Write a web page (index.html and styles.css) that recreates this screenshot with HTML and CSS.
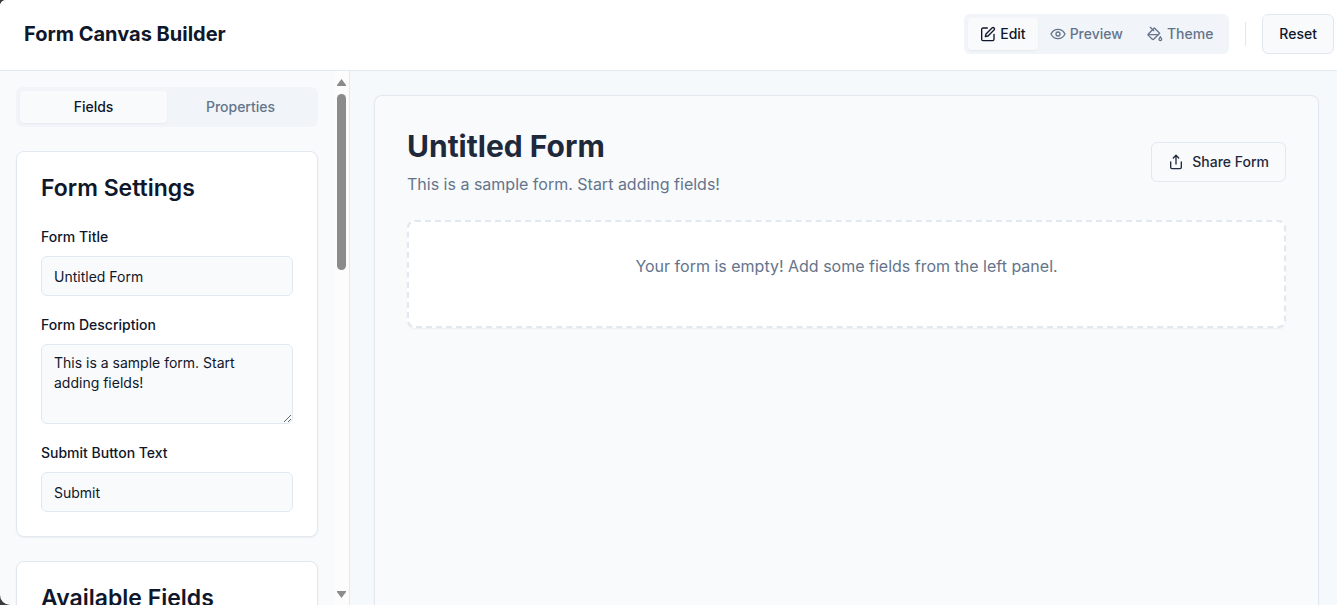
FILE: index.html
```html
<!DOCTYPE html>
<html lang="en">
<head>
<meta charset="utf-8">
<title>Form Canvas Builder</title>
<link rel="stylesheet" href="styles.css">
</head>
<body>
<div class="app">
  <header class="topbar">
    <h1 class="brand">Form Canvas Builder</h1>
    <div class="actions">
      <div class="segmented">
        <button class="segment active" type="button">
          <svg class="icon" viewBox="0 0 24 24"><path d="M11 3H4.500A2 2 0 0 0 2.500 5v15a2 2 0 0 0 2 2H19a2 2 0 0 0 2-2v-7.500"/><path d="M18.400 2.600a2.170 2.170 0 0 1 3 3L12 15l-4 1 1-4Z"/></svg>
          Edit
        </button>
        <button class="segment" type="button">
          <svg class="icon" viewBox="0 0 24 24"><path d="M1.500 12s3.500-7 10.500-7 10.500 7 10.500 7-3.500 7-10.500 7S1.500 12 1.500 12Z"/><circle cx="12" cy="12" r="3"/></svg>
          Preview
        </button>
        <button class="segment" type="button">
          <svg class="icon" viewBox="0 0 24 24"><path d="m19 11-8-8-8.600 8.600a2 2 0 0 0 0 2.800l5.200 5.200c.8.800 2 .8 2.800 0L19 11Z"/><path d="m5 2 5 5"/><path d="M2 13h15"/><path d="M22 20a2 2 0 1 1-4 0c0-1.600 1.700-2.400 2-4 .3 1.600 2 2.400 2 4Z"/></svg>
          Theme
        </button>
      </div>
      <div class="divider"></div>
      <button class="btn" type="button">Reset</button>
    </div>
  </header>
  <div class="workspace">
    <aside class="sidebar">
      <div class="sidebar-content">
        <div class="tabs">
          <button class="tab active" type="button">Fields</button>
          <button class="tab" type="button">Properties</button>
        </div>
        <section class="card">
          <h2 class="card-title">Form Settings</h2>
          <div class="fields">
            <div class="field">
              <label class="label" for="form-title">Form Title</label>
              <input class="control" id="form-title" type="text" value="Untitled Form">
            </div>
            <div class="field">
              <label class="label" for="form-description">Form Description</label>
              <textarea class="control area" id="form-description">This is a sample form. Start adding fields!</textarea>
            </div>
            <div class="field">
              <label class="label" for="submit-text">Submit Button Text</label>
              <input class="control" id="submit-text" type="text" value="Submit">
            </div>
          </div>
        </section>
        <section class="card">
          <h2 class="card-title">Available Fields</h2>
        </section>
      </div>
      <div class="scrollbar" aria-hidden="true">
        <svg class="arrow" viewBox="0 0 9 7"><path d="M4.500 0 9 6v1H0V6Z"/></svg>
        <div class="track"><div class="thumb"></div></div>
        <svg class="arrow" viewBox="0 0 9 7"><path d="M0 0h9v1L4.500 7 0 1Z"/></svg>
      </div>
    </aside>
    <main class="canvas">
      <div class="panel">
        <div class="panel-head">
          <div>
            <h2 class="form-title">Untitled Form</h2>
            <p class="form-description">This is a sample form. Start adding fields!</p>
          </div>
          <button class="btn share" type="button">
            <svg class="icon" viewBox="0 0 24 24"><path d="M4 12v8a2 2 0 0 0 2 2h12a2 2 0 0 0 2-2v-8"/><path d="m16 6-4-4-4 4"/><path d="M12 2v13"/></svg>
            Share Form
          </button>
        </div>
        <div class="empty">
          <p class="empty-text">Your form is empty! Add some fields from the left panel.</p>
        </div>
      </div>
    </main>
  </div>
</div>
</body>
</html>
```
FILE: styles.css
```css
* { box-sizing: border-box; }
html { background: #3a3a3a; }
body {
  margin: 0;
  font-family: Inter, "Liberation Sans", sans-serif;
  font-size: 16px;
  line-height: 24px;
  color: #0f172a;
}
h1, h2, p { margin: 0; }
button, input, textarea { font: inherit; color: inherit; }
.app {
  display: flex;
  flex-direction: column;
  height: 100vh;
  overflow: hidden;
  background: #f9fafc;
  border-radius: 6px 0 0 10px;
}
.topbar {
  display: flex;
  align-items: center;
  justify-content: space-between;
  padding: 14px 3px 16px 24px;
  background: #fff;
  border-bottom: 1px solid #e2e8f0;
}
.brand { font-size: 20px; line-height: 28px; font-weight: 700; }
.actions { display: flex; align-items: center; gap: 16px; }
.segmented, .tabs {
  display: flex;
  height: 40px;
  padding: 4px;
  background: #f1f5f9;
  border-radius: 6px;
}
.segment, .tab {
  display: flex;
  align-items: center;
  justify-content: center;
  gap: 4px;
  padding: 0 12px;
  border: 0;
  border-radius: 4px;
  background: none;
  color: #64748b;
  font-size: 14px;
  line-height: 20px;
  font-weight: 500;
}
.tab { flex: 1; }
.segment.active, .tab.active {
  background: #f9fafc;
  color: #0f172a;
  box-shadow: 0 1px 2px rgb(0 0 0 / 5%);
}
.icon {
  width: 16px;
  height: 16px;
  fill: none;
  stroke: currentColor;
  stroke-width: 2;
  stroke-linecap: round;
  stroke-linejoin: round;
}
.divider { width: 1px; height: 24px; background: #e2e8f0; }
.btn {
  display: flex;
  align-items: center;
  gap: 8px;
  height: 40px;
  padding: 0 16px;
  border: 1px solid #e2e8f0;
  border-radius: 6px;
  background: #f9fafc;
  font-size: 14px;
  line-height: 20px;
  font-weight: 500;
}
.share { color: #1e293b; }
.workspace { display: flex; flex: 1; min-height: 0; }
.sidebar {
  display: flex;
  flex: 0 0 350px;
  border-right: 1px solid #e2e8f0;
}
.sidebar-content {
  display: flex;
  flex: 1;
  flex-direction: column;
  gap: 24px;
  padding: 16px;
  overflow: hidden;
}
.tabs, .card { flex-shrink: 0; }
.card {
  padding: 24px;
  background: #fff;
  border: 1px solid #e2e8f0;
  border-radius: 8px;
  box-shadow: 0 1px 2px rgb(0 0 0 / 5%);
}
.card-title { margin-bottom: 24px; font-size: 23px; line-height: 24px; font-weight: 600; }
.fields { display: flex; flex-direction: column; gap: 16px; }
.field { display: flex; flex-direction: column; gap: 6px; }
.label { font-size: 14px; line-height: 26px; font-weight: 500; }
.control {
  width: 100%;
  height: 40px;
  padding: 8px 12px;
  border: 1px solid #e2e8f0;
  border-radius: 6px;
  background: #f9fafc;
  font-size: 14px;
  line-height: 20px;
}
.area { display: block; height: 80px; resize: vertical; }
.scrollbar {
  display: flex;
  flex-direction: column;
  align-items: center;
  gap: 8px;
  width: 15px;
  padding: 8px 0 7px;
  background: #fcfcfc;
}
.arrow { width: 9px; height: 7px; fill: #8b8b8b; }
.track { flex: 1; width: 9px; }
.thumb { height: 36%; border-radius: 5px; background: #8b8b8b; }
.canvas {
  display: flex;
  flex: 1;
  padding: 24px 18px 0 24px;
  background: #f5f9fc;
}
.panel {
  flex: 1;
  padding: 32px;
  background: #f9fafc;
  border: 1px solid #e2e8f0;
  border-bottom: 0;
  border-radius: 8px 8px 0 0;
  box-shadow: 0 1px 2px rgb(0 0 0 / 5%);
}
.panel-head {
  display: flex;
  align-items: center;
  justify-content: space-between;
  margin-bottom: 24px;
}
.form-title { margin-bottom: 8px; font-size: 30px; line-height: 36px; font-weight: 700; color: #1e293b; }
.form-description { color: #64748b; }
.empty {
  padding: 32px;
  border: 2px dashed #e2e8f0;
  border-radius: 8px;
  background: #fff;
  color: #64748b;
  text-align: center;
  box-shadow: 0 1px 2px rgb(0 0 0 / 5%);
}
.empty-text { margin-bottom: 16px; }
```
